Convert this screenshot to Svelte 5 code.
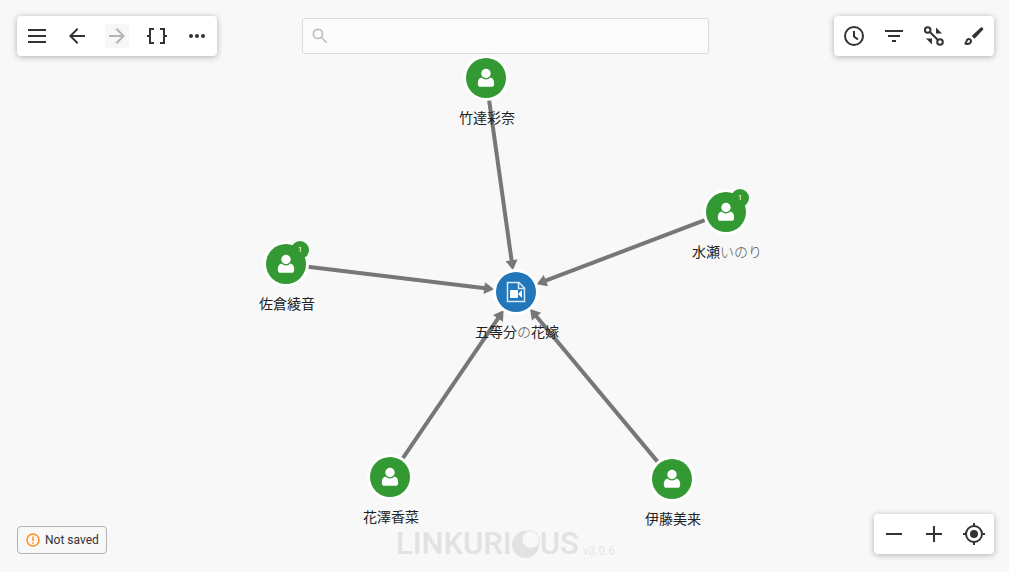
<script>
let query = '';

const nodes = [
    { id: 'show', label: '五等分の花嫁', type: 'video', x: 516, y: 292 },
    { id: 'taketatsu', label: '竹達彩奈', type: 'person', x: 486, y: 78 },
    { id: 'minase', label: '水瀬いのり', type: 'person', x: 726, y: 212, badge: 1 },
    { id: 'sakura', label: '佐倉綾音', type: 'person', x: 286, y: 264, badge: 1 },
    { id: 'hanazawa', label: '花澤香菜', type: 'person', x: 390, y: 477 },
    { id: 'ito', label: '伊藤美来', type: 'person', x: 672, y: 479 },
];

const gap = 22;
const arrow = 10;

// every person points to the show in the middle
const getEdge = (from, to) => {
    const dx = to.x - from.x;
    const dy = to.y - from.y;
    const length = Math.hypot(dx, dy);
    const ux = dx / length;
    const uy = dy / length;
    return {
        id: from.id,
        x1: from.x + ux * gap,
        y1: from.y + uy * gap,
        x2: to.x - ux * (gap + arrow - 1),
        y2: to.y - uy * (gap + arrow - 1),
        tipX: to.x - ux * gap,
        tipY: to.y - uy * gap,
        deg: Math.atan2(dy, dx) * 180 / Math.PI,
    };
}

// kana are drawn lighter than kanji
const isKana = (text) => /[\u3040-\u30ff]/.test(text);
const split = (label) => label.match(/[\u3040-\u30ff]+|[^\u3040-\u30ff]+/g);

const edges = nodes.slice(1).map((node) => getEdge(node, nodes[0]));
</script>

<div class="workspace">
    <svg class="graph" role="img" aria-label="Graph">
        {#each edges as edge (edge.id)}
            <line class="edge" x1={edge.x1} y1={edge.y1} x2={edge.x2} y2={edge.y2} />
            <path class="arrow" d="M0 0L-10 -6V6Z" transform="translate({edge.tipX} {edge.tipY}) rotate({edge.deg})" />
        {/each}
        {#each nodes as node (node.id)}
            <g transform="translate({node.x} {node.y})">
                <circle class="halo" r="23" />
                <circle class={node.type} r="20" />
                {#if node.type === 'person'}
                    <path class="glyph" d="M-4.500 -0.500C-7 0-8.200 2-8.200 5.500C-8.200 8-7.200 8.800-5.500 8.800H5.500C7.200 8.800 8.200 8 8.200 5.500C8.200 2 7 0 4.500 -0.500C2 2-2 2-4.500 -0.500Z" />
                    <circle class="glyph" cy="-4.500" r="4.700" />
                {:else}
                    <path class="sheet" d="M-8.500 -9.500H3L8.500 -4V9.500H-8.500ZM2.500 -9.500V-3.500H8.500" />
                    <rect class="glyph" x="-6" y="-2" width="8" height="8" rx="1" />
                    <path class="glyph" d="M2 2L6 -2V6Z" />
                {/if}
                {#if node.badge}
                    <circle class="person" cx="14" cy="-14" r="9" />
                    <text class="badge" x="14" y="-12">{node.badge}</text>
                {/if}
                <text class="label" x="1" y="45">{#each split(node.label) as part}<tspan class:kana={isKana(part)}>{part}</tspan>{/each}</text>
            </g>
        {/each}
    </svg>

    <header class="bar">
        <div class="toolbar">
            <button aria-label="Menu">
                <svg viewBox="0 0 24 24"><path d="M3 5h18v2H3zM3 11h18v2H3zM3 17h18v2H3z" /></svg>
            </button>
            <button aria-label="Undo">
                <svg viewBox="0 0 24 24"><path d="M20 11H7.800l5.600-5.600L12 4l-8 8 8 8 1.400-1.400L7.800 13H20z" /></svg>
            </button>
            <button aria-label="Redo" disabled>
                <svg viewBox="0 0 24 24"><path d="M4 11h12.200l-5.600-5.600L12 4l8 8-8 8-1.400-1.400 5.600-5.600H4z" /></svg>
            </button>
            <button aria-label="Query">
                <svg viewBox="0 0 24 24"><path class="line" d="M9 5H5v6L4 12H2M4 12l1 1v6h4M15 5h4v6l1 1h2M20 12l-1 1v6h-4" /></svg>
            </button>
            <button aria-label="More">
                <svg viewBox="0 0 24 24"><circle cx="6" cy="12" r="2" /><circle cx="12" cy="12" r="2" /><circle cx="18" cy="12" r="2" /></svg>
            </button>
        </div>

        <label class="search">
            <svg viewBox="0 0 24 24"><circle cx="9.500" cy="9.500" r="5.500" /><path d="M13.500 13.500L19.800 19.800" /></svg>
            <input type="text" aria-label="Search" bind:value={query} />
        </label>

        <div class="toolbar end">
            <button aria-label="Timeline">
                <svg viewBox="0 0 24 24"><circle class="line" cx="12" cy="12" r="9" /><path class="line" d="M12 7v5.500l4 3" /></svg>
            </button>
            <button aria-label="Filter">
                <svg viewBox="0 0 24 24"><path d="M3 6h18v2H3zM6 11h12v2H6zM10 16h4v2h-4z" /></svg>
            </button>
            <button aria-label="Layout">
                <svg viewBox="0 0 24 24">
                    <circle class="line" cx="5.700" cy="6" r="2.800" />
                    <circle class="line" cx="18" cy="18" r="2.800" />
                    <path class="line" d="M7.800 8L16 16" />
                    <path d="M14 3.500L20 9.500H14ZM4 14.500H10V20.500Z" />
                </svg>
            </button>
            <button aria-label="Style">
                <svg viewBox="0 0 24 24">
                    <path d="M18.500 3.800a1.500 1.500 0 0 1 2.300 2.300L12.500 14.700L9.700 11.900Z" />
                    <path class="line" d="M2.500 19.500C4 19.500 4.300 18.500 4.500 17.300C4.800 15.500 6.200 14.800 7.600 15.200C9 15.600 9.400 17 8.700 18.200C7.800 19.700 5.500 20.300 3.500 19.500" />
                </svg>
            </button>
        </div>
    </header>

    <footer class="bar">
        <button class="status">
            <svg viewBox="0 0 14 14"><circle cx="7" cy="7" r="6" /><path d="M7 3.500V8M7 9.300V10.700" /></svg>
            Not saved
        </button>

        <div class="brand">
            <span class="name">LINKURI</span>
            <svg viewBox="0 0 28 28">
                <circle cx="13.500" cy="14.500" r="13.500" />
                <circle class="hole" cx="19" cy="9.500" r="8.500" />
                <path class="rim" d="M14 1.800C20 -1 25.500 2.500 27 8C27.600 10.500 27.200 13 26 15.500" />
            </svg>
            <span class="name">US</span>
            <span class="version">v3.0.6</span>
        </div>

        <div class="toolbar end">
            <button aria-label="Zoom out">
                <svg viewBox="0 0 24 24"><path d="M4 11h16v2H4z" /></svg>
            </button>
            <button aria-label="Zoom in">
                <svg viewBox="0 0 24 24"><path d="M4 11h7V4h2v7h7v2h-7v7h-2v-7H4z" /></svg>
            </button>
            <button aria-label="Center the graph">
                <svg viewBox="0 0 24 24"><circle class="line" cx="12" cy="12" r="8" /><circle cx="12" cy="12" r="4" /><path class="line" d="M12 1v3M12 20v3M1 12h3M20 12h3" /></svg>
            </button>
        </div>
    </footer>
</div>

<style>
:global(body) {
    margin: 0;
    background-color: #f8f8f8;
}
.workspace {
    position: relative;
    display: flex;
    flex-direction: column;
    justify-content: space-between;
    min-height: 100vh;
    color: #333;
    font-family: Roboto, "Noto Sans CJK JP", sans-serif;
    overflow: hidden;
}
.graph {
    position: absolute;
    inset: 0;
    width: 100%;
    height: 100%;
}
.edge {
    stroke: #777;
    stroke-width: 4;
}
.arrow {
    fill: #777;
}
.halo,
.glyph {
    fill: #fff;
}
.person {
    fill: #339933;
}
.video {
    fill: #2277bb;
}
.sheet {
    fill: none;
    stroke: #dbe9f4;
    stroke-width: 1.5;
}
.badge {
    fill: #fff;
    font-size: 8px;
    text-anchor: middle;
}
.label {
    fill: #222;
    font-family: "Noto Sans CJK JP", sans-serif;
    font-size: 14px;
    text-anchor: middle;
}
.kana {
    fill: #555;
    font-weight: 300;
}
.bar {
    position: relative;
    display: grid;
    grid-template-columns: 1fr minmax(0, 407px) 1fr;
    pointer-events: none;
}
.bar button,
.bar label {
    pointer-events: auto;
}
header {
    align-items: center;
    padding: 16px 15px 0 17px;
}
footer {
    align-items: end;
    padding: 0 15px 14px 17px;
}
.toolbar {
    display: flex;
    justify-self: start;
    background-color: #fff;
    border-radius: 4px;
    box-shadow: 0 1px 6px rgba(0, 0, 0, 0.3);
}
.end {
    justify-self: end;
}
.toolbar button {
    display: flex;
    padding: 8px;
    border: 0;
    background: none;
    cursor: pointer;
}
.toolbar svg {
    width: 24px;
    height: 24px;
    border-radius: 3px;
    fill: #333;
}
.toolbar .line {
    fill: none;
    stroke: #333;
    stroke-width: 2;
}
.toolbar button:disabled svg {
    background-color: #f6f7f7;
    fill: #b3b3b3;
}
.search {
    display: flex;
    align-items: center;
    gap: 8px;
    box-sizing: border-box;
    height: 36px;
    padding: 0 7px;
    border: 1px solid #d9dbdb;
    border-radius: 3px;
    background-color: #fcfcfc;
}
.search svg {
    width: 20px;
    height: 20px;
    fill: none;
    stroke: #bbb;
    stroke-width: 2;
}
.search input {
    flex: 1;
    min-width: 0;
    border: 0;
    outline: 0;
    background: none;
    color: #333;
    font: inherit;
    font-size: 14px;
}
footer .toolbar,
.status {
    margin: 0 0 4px;
}
.status {
    display: flex;
    justify-self: start;
    align-items: center;
    gap: 5px;
    height: 28px;
    padding: 0 7px 0 8px;
    border: 1px solid #b3b3b3;
    border-radius: 4px;
    background: none;
    color: #333;
    font-family: inherit;
    font-size: 12px;
}
.status svg {
    width: 14px;
    height: 14px;
    fill: none;
    stroke: #ff8c1f;
    stroke-width: 1.5;
}
.brand {
    display: flex;
    justify-content: center;
    align-items: flex-end;
    height: 28px;
    color: #e2e2e2;
}
.brand svg {
    width: 28px;
    height: 28px;
    fill: #e2e2e2;
}
.brand .hole {
    fill: #f8f8f8;
}
.brand .rim {
    fill: none;
    stroke: #e2e2e2;
}
.name {
    font-size: 31px;
    font-weight: 500;
    line-height: 28px;
}
.version {
    margin-left: 4px;
    color: #e3e7ec;
    font-size: 12px;
    line-height: 14px;
}
</style>
